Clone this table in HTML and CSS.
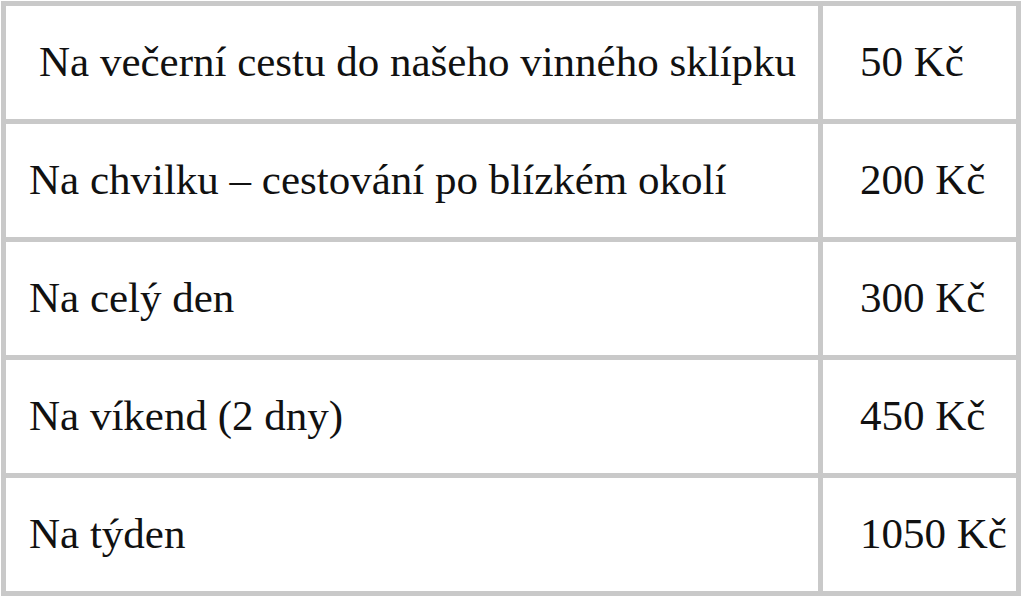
FILE: index.html
```html
<!DOCTYPE html>
<html lang="cs">
<head>
<meta charset="utf-8">
<link rel="stylesheet" href="styles.css">
</head>
<body>
<table class="prices">
  <tr><td class="name first">Na večerní cestu do našeho vinného sklípku</td><td class="price">50 Kč</td></tr>
  <tr><td class="name">Na chvilku – cestování po blízkém okolí</td><td class="price">200 Kč</td></tr>
  <tr><td class="name">Na celý den</td><td class="price">300 Kč</td></tr>
  <tr><td class="name">Na víkend (2 dny)</td><td class="price">450 Kč</td></tr>
  <tr><td class="name">Na týden</td><td class="price">1050 Kč</td></tr>
</table>
</body>
</html>
```
FILE: styles.css
```css
html, body {
  margin: 0;
  padding: 0;
  background: #fff;
}
body {
  padding: 1px;
  font-family: "Liberation Serif", "Times New Roman", serif;
  color: #111;
}
.prices {
  border-collapse: collapse;
  width: 1020px;
  border: 5px solid #c9c9c9;
}
.prices td {
  border: 5px solid #c9c9c9;
  height: 118px;
  padding: 0 0 2px 0;
  font-size: 43px;
  vertical-align: middle;
  line-height: 1;
  box-sizing: border-box;
  white-space: nowrap;
}
.prices td.name {
  width: 817px;
  padding-left: 23px;
}
.prices td.name.first {
  padding-left: 33px;
}
.prices td.price {
  padding-left: 37px;
}
```
